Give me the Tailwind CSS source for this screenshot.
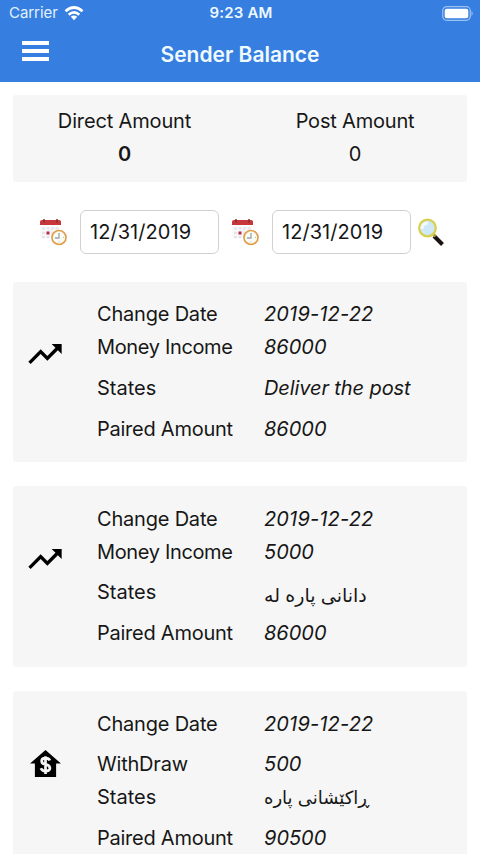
<!DOCTYPE html>
<html lang="en">
<head>
<meta charset="utf-8">
<title>Sender Balance</title>
<script src="https://cdn.jsdelivr.net/npm/@tailwindcss/browser@4"></script>
</head>
<body class="bg-white text-[#171717] font-['Inter','DejaVu_Sans',sans-serif] overflow-hidden h-[854px] w-[480px]">
<svg class="hidden">
  <symbol id="trend" viewBox="0 0 24 24"><path d="M16 6l2.29 2.29-4.88 4.88-4-4L2 16.59 3.41 18l6-6 4 4 6.3-6.29L22 12V6z"/></symbol>
  <symbol id="cal" viewBox="0 0 30 30">
    <rect x="2" y="9" width="20" height="12" fill="#fafafa"/>
    <path d="M2 8V4.500q0-1.500 2-1.500h17q2 0 2 1.500V8z" fill="#c6363b"/>
    <path d="M6 2v3.500M19 2v3.500" stroke="#8f2931" stroke-width="1.500"/>
    <path d="M4 11.500h17M4 16h14M4 20h8" stroke="#e6e5e9" stroke-width="2.500" stroke-dasharray="3 1.500"/>
    <rect x="8.500" y="14.500" width="3" height="3" fill="#b92e45"/>
    <circle cx="21" cy="20.500" r="7" fill="#fbfaf5" stroke="#dfa04d" stroke-width="1.700"/>
    <path d="M21 16v5h-4" fill="none" stroke="#91a9ad" stroke-width="1.300"/>
    <path d="M21 24.500v1M25 20.500h1" stroke="#c7b898"/>
  </symbol>
</svg>
<header class="bg-[#367fe0] text-white h-[82px] flex flex-col">
  <div class="h-[26px] grid grid-cols-3 items-center pl-[9px] pr-[7px] pt-px text-[15px]">
    <div class="flex items-center gap-[6px] text-[#e3f1ff]"><span class="tracking-[-.05px]">Carrier</span>
      <svg class="w-5 h-[15px]" viewBox="0 0 20 15" fill="none" stroke="#fff" stroke-width="2.700"><path d="M1.500 5.200Q10-2.200 18.500 5.200M4.700 8.700Q10 4.100 15.300 8.700"/><path d="M10 14.200l-3.200-3.400q3.200-2.400 6.400 0z" fill="#fff" stroke="none"/></svg>
    </div>
    <div class="text-center font-semibold tracking-[.2px] text-[#eef8ff]">9:23 AM</div>
    <div class="flex justify-end"><svg class="w-[31px] h-[15px] -mt-px" viewBox="0 0 31 15"><rect x=".7" y=".7" width="27.600" height="13.600" rx="4" fill="none" stroke="#9bc1f2" stroke-width="1.200"/><rect x="2.700" y="2.700" width="23.600" height="9.600" rx="2" fill="#fff"/><path d="M29.500 5v5q1.200-.8 1.200-2.500T29.500 5" fill="#9bc1f2"/></svg></div>
  </div>
  <div class="h-14 grid grid-cols-[96px_1fr_96px] items-center">
    <div class="pl-[22px] pb-[7px]"><svg class="w-[27px] h-5" viewBox="0 0 27 20" fill="#fff"><path d="M0 0h27v4H0zM0 8h27v4H0zM0 16h27v4H0z"/></svg></div>
    <h1 class="text-center text-[21px] font-semibold text-[#f0faff] pt-px">Sender Balance</h1>
  </div>
</header>
<main class="px-[13px] pt-[13px]">
  <section class="bg-[#f6f6f6] rounded-[3px] h-[87px] pt-[10px] grid grid-cols-2 text-center text-[20px] leading-[33px]">
    <div class="pr-[4px]"><div class="tracking-[-.15px]">Direct Amount</div><div class="font-semibold">0</div></div>
    <div class="pl-[3px]"><div class="tracking-[-.2px]">Post Amount</div><div>0</div></div>
  </section>
  <section class="h-[99.600px] pl-[25px] flex items-center text-[20px] tracking-[.05px]">
    <svg class="w-[30px] h-[30px]"><use href="#cal"/></svg>
    <div class="ml-[12px] w-[139px] h-11 rounded-[6px] border-[1.500px] border-[#d0d0d0] flex items-center pl-[9px]">12/31/2019</div>
    <svg class="w-[30px] h-[30px] ml-[11px]"><use href="#cal"/></svg>
    <div class="ml-[12px] w-[139px] h-11 rounded-[6px] border-[1.500px] border-[#d0d0d0] flex items-center pl-[9px]">12/31/2019</div>
    <svg class="w-[28px] h-[30px] ml-[6px]" viewBox="0 0 28 30"><path d="M17 19l8.500 8.500" stroke="#191312" stroke-width="4"/><path d="M15.500 16.500l3 3" stroke="#a09835" stroke-width="2.500"/><circle cx="10.500" cy="11" r="8.300" fill="#cfe8f8" stroke="#d8d04f" stroke-width="2.300"/><path d="M5 12q0-6 6-6" fill="none" stroke="#f2faff" stroke-width="3"/></svg>
  </section>
  <div class="flex flex-col gap-6 text-[20px] leading-[33px]">
    <article class="bg-[#f6f6f6] rounded-[3px] h-[180.800px] shrink-0 pt-[16.500px] grid grid-cols-[84px_167px_1fr]">
      <div><svg class="ml-[12px] mt-[36px] w-[40px] h-[40px]"><use href="#trend"/></svg></div>
      <div><div class="tracking-[-.2px]">Change Date</div><div class="tracking-[-.35px]">Money Income</div><div class="mt-[7.500px]">States</div><div class="mt-2 tracking-[-.25px]">Paired Amount</div></div>
      <div class="italic"><div class="tracking-[.15px]">2019-12-22</div><div>86000</div><div class="mt-[7.500px] tracking-[-.1px]">Deliver the post</div><div class="mt-2">86000</div></div>
    </article>
    <article class="bg-[#f6f6f6] rounded-[3px] h-[180.800px] shrink-0 pt-[16.500px] grid grid-cols-[84px_167px_1fr]">
      <div><svg class="ml-[12px] mt-[36px] w-[40px] h-[40px]"><use href="#trend"/></svg></div>
      <div><div class="tracking-[-.2px]">Change Date</div><div class="tracking-[-.35px]">Money Income</div><div class="mt-[7.500px]">States</div><div class="mt-2 tracking-[-.25px]">Paired Amount</div></div>
      <div class="italic"><div class="tracking-[.15px]">2019-12-22</div><div>5000</div><div class="mt-[7.500px] h-[33px] pt-[3px] not-italic text-[19px]"><bdi dir="rtl">دانانی پاره له</bdi></div><div class="mt-2">86000</div></div>
    </article>
    <article class="bg-[#f6f6f6] rounded-[3px] h-[180.800px] shrink-0 pt-[16.500px] grid grid-cols-[84px_167px_1fr]">
      <div><svg class="ml-[16.500px] mt-[42px] w-[31px] h-[27px]" viewBox="0 0 32 28"><path d="M16 0L0 14h5v14h22V14h5z"/><path d="M20.500 11q-1-2.500-4.500-2.500-4 0-4 3t4 3.500 4.500 3.500-4.500 3.500q-3.500 0-4.800-3M16 6.500v18.500" fill="none" stroke="#f6f6f6" stroke-width="2.800"/></svg></div>
      <div><div class="tracking-[-.2px]">Change Date</div><div class="mt-[7.500px] tracking-[-.2px]">WithDraw</div><div>States</div><div class="mt-2 tracking-[-.25px]">Paired Amount</div></div>
      <div class="italic"><div class="tracking-[.15px]">2019-12-22</div><div class="mt-[7.500px]">500</div><div class="h-[33px] not-italic text-[18px]"><bdi dir="rtl">ڕاكێشانی پاره</bdi></div><div class="mt-2">90500</div></div>
    </article>
  </div>
</main>
</body>
</html>
